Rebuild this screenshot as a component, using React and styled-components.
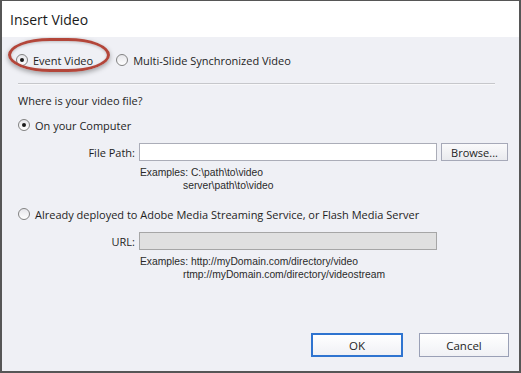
import React from "react";
import styled, { createGlobalStyle } from "styled-components";

const GlobalStyle = createGlobalStyle`
    html, body {
        margin: 0;
        padding: 0;
        background: #ffffff;
    }
    body {
        font-family: "Open Sans", "Noto Sans", sans-serif;
        color: #1e1e1e;
    }
`;

function Radio({ checked }) {
    return (
        <RadioCircle>
            {checked && <RadioDot />}
        </RadioCircle>
    );
}

function App() {
    return (
        <>
            <GlobalStyle />
            <Window>
                <TitleBar>Insert Video</TitleBar>
                <Body>
                    <ModeRow>
                        <Option>
                            <Radio checked />
                            <span>Event Video</span>
                            <Annotation />
                        </Option>
                        <Option>
                            <Radio />
                            <span>Multi-Slide Synchronized Video</span>
                        </Option>
                    </ModeRow>
                    <Separator />
                    <Question>Where is your video file?</Question>
                    <SourceRow>
                        <Option>
                            <Radio checked />
                            <span>On your Computer</span>
                        </Option>
                    </SourceRow>
                    <FieldRow>
                        <FieldLabel>File Path:</FieldLabel>
                        <TextInput />
                        <SmallButton>Browse...</SmallButton>
                    </FieldRow>
                    <Examples>
                        <div>Examples: C:\path\to\video</div>
                        <Indented>server\path\to\video</Indented>
                    </Examples>
                    <SourceRow $gap={14}>
                        <Option>
                            <Radio />
                            <span>Already deployed to Adobe Media Streaming Service, or Flash Media Server</span>
                        </Option>
                    </SourceRow>
                    <FieldRow>
                        <FieldLabel>URL:</FieldLabel>
                        <TextInput disabled />
                    </FieldRow>
                    <Examples>
                        <div>Examples: http://myDomain.com/directory/video</div>
                        <Indented>rtmp://myDomain.com/directory/videostream</Indented>
                    </Examples>
                    <Footer>
                        <DialogButton $primary>OK</DialogButton>
                        <DialogButton>Cancel</DialogButton>
                    </Footer>
                </Body>
            </Window>
        </>
    );
}

export default App;

const Window = styled.div`
    box-sizing: border-box;
    width: 521px;
    height: 373px;
    border-left: 2px solid #565656;
    border-top: 1px solid #565656;
    border-right: 2px solid #565656;
    border-bottom: 2px solid #565656;
    display: flex;
    flex-direction: column;
    overflow: hidden;
`;

const TitleBar = styled.div`
    height: 36px;
    background: #ffffff;
    padding-left: 8px;
    display: flex;
    align-items: center;
    font-size: 14px;
    color: #1a1a1a;
`;

const Body = styled.div`
    flex: 1;
    background: #eff0f5;
    padding-left: 14px;
    display: flex;
    flex-direction: column;
    font-size: 11px;
`;

const ModeRow = styled.div`
    height: 46px;
    display: flex;
    align-items: center;
    gap: 23px;
`;

const Option = styled.label`
    position: relative;
    display: flex;
    align-items: center;
    gap: 5px;
    height: 16px;
    white-space: nowrap;
`;

const Annotation = styled.div`
    position: absolute;
    left: -8px;
    top: -14px;
    width: 96px;
    height: 28px;
    border: 3px solid #b3463a;
    border-radius: 42px / 17px;
    box-shadow: 0 2px 5px rgba(0, 0, 0, 0.35), inset 0 1px 3px rgba(0, 0, 0, 0.2);
    pointer-events: none;
`;

const RadioCircle = styled.span`
    box-sizing: border-box;
    width: 12px;
    height: 12px;
    border-radius: 50%;
    border: 1px solid #828282;
    background: linear-gradient(#e6e6ea, #ffffff);
    display: flex;
    align-items: center;
    justify-content: center;
    flex-shrink: 0;
`;

const RadioDot = styled.span`
    width: 4px;
    height: 4px;
    border-radius: 50%;
    background: #1a1a1a;
`;

const Separator = styled.div`
    width: 477px;
    height: 1px;
    background: #c6c7cb;
    border-bottom: 1px solid #f8f8fa;
    margin-left: 2px;
`;

const Question = styled.div`
    margin: 8px 0 0 2px;
    line-height: 16px;
`;

const SourceRow = styled.div`
    margin-top: ${(p) => p.$gap || 8}px;
    padding-left: 2px;
`;

const FieldRow = styled.div`
    margin-top: 10px;
    display: flex;
    align-items: center;
    height: 18px;
`;

const FieldLabel = styled.div`
    width: 119px;
    text-align: right;
    padding-right: 4px;
`;

const TextInput = styled.div`
    box-sizing: border-box;
    width: 298px;
    height: 18px;
    border: 1px solid ${(p) => (p.disabled ? "#a6a6a6" : "#abadb8")};
    background: ${(p) => (p.disabled ? "#e0e0e0" : "#ffffff")};
`;

const SmallButton = styled.div`
    box-sizing: border-box;
    margin-left: 4px;
    width: 67px;
    height: 18px;
    border: 1px solid #a6a9b8;
    background: linear-gradient(#fafafb, #e9eaee);
    display: flex;
    align-items: center;
    justify-content: center;
`;

const Examples = styled.div`
    margin: 6px 0 0 124px;
    font-family: "Liberation Sans", Arial, sans-serif;
    font-size: 10.3px;
    line-height: 12.5px;
    color: #2a2a2a;
`;

const Indented = styled.div`
    padding-left: 43px;
`;

const Footer = styled.div`
    margin-top: auto;
    display: flex;
    justify-content: flex-end;
    gap: 16px;
    padding: 0 10px 14px 0;
`;

const DialogButton = styled.div`
    box-sizing: border-box;
    width: ${(p) => (p.$primary ? 92 : 90)}px;
    height: 24px;
    border: ${(p) => (p.$primary ? "2px solid #2f74d0" : "1px solid #9aa0b6")};
    background: linear-gradient(#ffffff, #f0f1f5);
    display: flex;
    align-items: center;
    justify-content: center;
    font-size: 11.5px;
`;
